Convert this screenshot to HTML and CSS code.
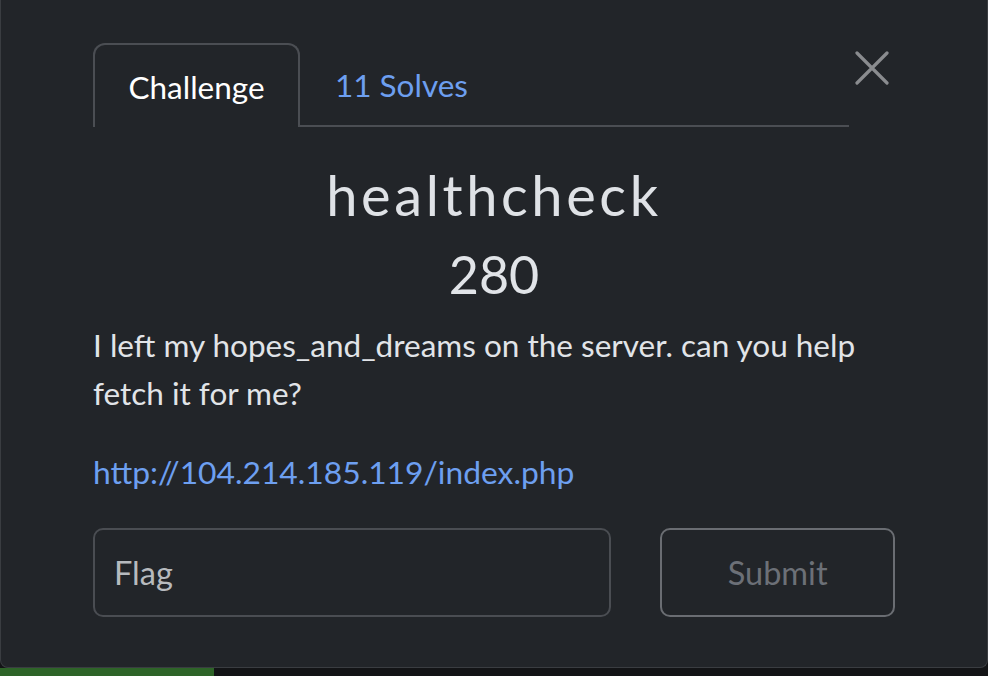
FILE: index.html
```html
<!DOCTYPE html>
<html>
<head>
<meta charset="utf-8">
<link rel="stylesheet" href="styles.css">
</head>
<body>
<div class="page">
  <div class="modal">
    <div class="head">
      <nav class="tabs">
        <div class="tab active">Challenge</div>
        <div class="tab link">11 Solves</div>
        <div class="tab-rest"></div>
      </nav>
      <button class="close" aria-label="Close">
        <svg width="34" height="34" viewBox="0 0 34 34"><path d="M2 2 L32 32 M32 2 L2 32" stroke="#8a8c8f" stroke-width="3.2" stroke-linecap="round" fill="none"/></svg>
      </button>
    </div>
    <h2 class="title">healthcheck</h2>
    <div class="points">280</div>
    <p class="desc">I left my hopes_and_dreams on the server. can you help fetch it for me?</p>
    <p class="url"><a href="#">http://104.214.185.119/index.php</a></p>
    <div class="form">
      <div class="input">Flag</div>
      <div class="submit">Submit</div>
    </div>
  </div>
  <div class="below">
    <div class="green"></div>
  </div>
</div>
</body>
</html>
```
FILE: styles.css
```css
html, body {
  margin: 0;
  padding: 0;
  background: #131416;
  font-family: Lato, "Open Sans", sans-serif;
}
.page {
  width: 988px;
  height: 676px;
  display: flex;
  flex-direction: column;
  overflow: hidden;
}
.modal {
  box-sizing: border-box;
  height: 668px;
  background: #222529;
  border: 1px solid #3a3d41;
  border-top: none;
  border-radius: 0 0 8px 8px;
  padding: 43px 92px 0 92px;
  display: flex;
  flex-direction: column;
  color: #e1e4e8;
}
.head {
  display: flex;
  align-items: flex-start;
}
.tabs {
  display: flex;
  width: 756px;
  height: 84px;
}
.tab {
  box-sizing: border-box;
  height: 84px;
  font-size: 31.5px;
  display: flex;
  align-items: center;
  padding-top: 1px;
}
.tab.active {
  width: 207px;
  justify-content: center;
  border: 2px solid #4b4e53;
  border-bottom: none;
  border-radius: 12px 12px 0 0;
  color: #ffffff;
}
.tab.link {
  color: #6d9ff0;
  padding-left: 35px;
  padding-right: 35px;
  border-bottom: 2px solid #4b4e53;
}
.tab-rest {
  flex: 1;
  border-bottom: 2px solid #4b4e53;
}
.close {
  margin-left: 6px;
  margin-top: 8px;
  background: none;
  border: none;
  padding: 0;
  width: 34px;
  height: 34px;
}
.title {
  margin: 33px 0 0;
  text-align: center;
  font-weight: 400;
  font-size: 56px;
  letter-spacing: 3.6px;
  line-height: 70px;
  color: #dfe2e6;
}
.points {
  text-align: center;
  font-size: 52px;
  line-height: 60px;
  margin-top: 14px;
  color: #e1e4e8;
}
.desc {
  margin: 17px 0 0;
  font-size: 31.5px;
  line-height: 48px;
  color: #e1e4e8;
}
.url {
  margin: 31px 0 0;
  font-size: 31.8px;
  line-height: 48px;
}
.url a {
  color: #6d9ff0;
  text-decoration: none;
}
.form {
  display: flex;
  gap: 49px;
  margin-top: 32px;
}
.input {
  box-sizing: border-box;
  width: 519px;
  height: 89px;
  border: 2px solid #4a4d52;
  border-radius: 10px;
  display: flex;
  align-items: center;
  padding-left: 19px;
  font-size: 32.5px;
  color: #b7babe;
}
.submit {
  box-sizing: border-box;
  width: 235px;
  height: 89px;
  border: 2px solid #6a6d72;
  border-radius: 10px;
  display: flex;
  align-items: center;
  justify-content: center;
  font-size: 32.5px;
  color: #6c7077;
}
.below {
  flex: 1;
  display: flex;
}
.green {
  width: 214px;
  background: #2e6428;
}
```
